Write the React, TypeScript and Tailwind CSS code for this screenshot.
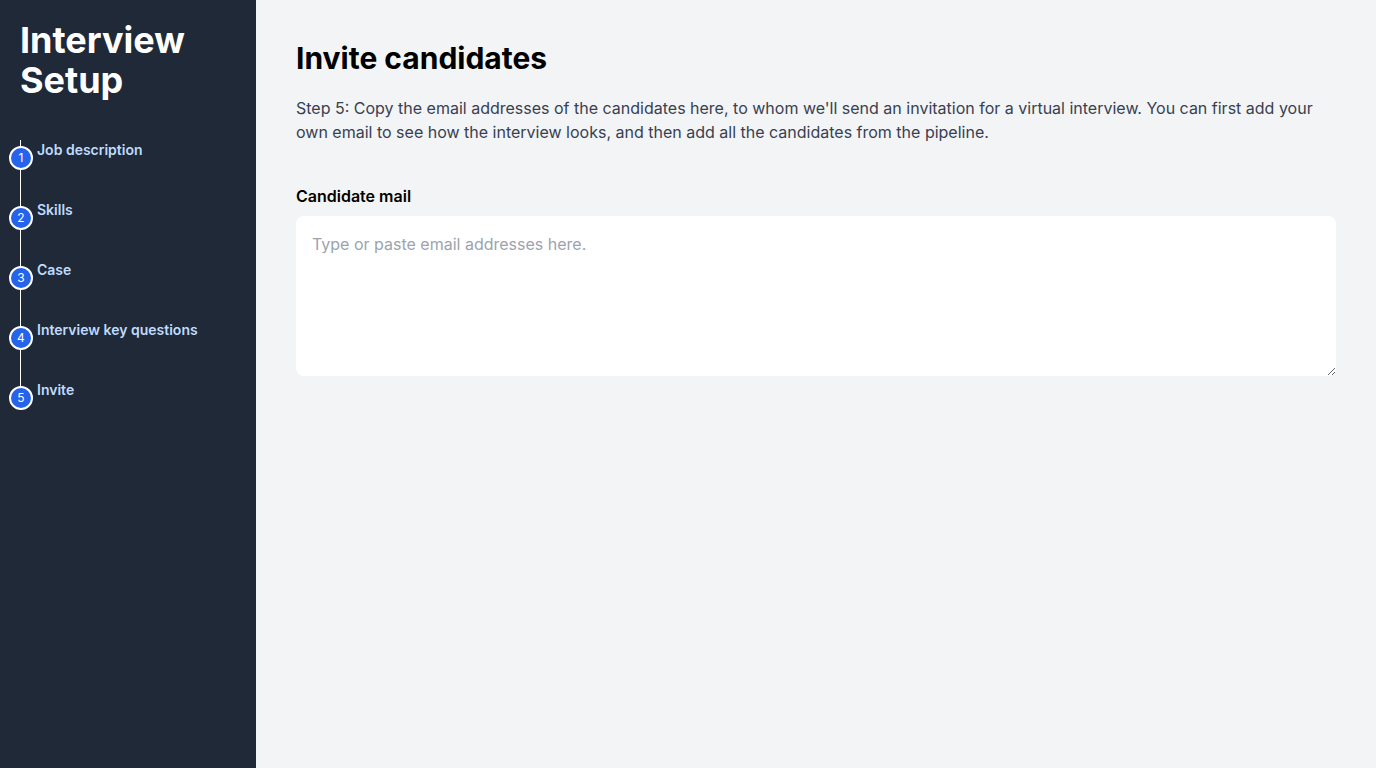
const steps = ["Job description", "Skills", "Case", "Interview key questions", "Invite"];

export default function App() {
  return (
    <div className="flex min-h-screen font-['Inter',sans-serif]">
      <aside className="w-64 shrink-0 bg-[#1f2937] px-5 pt-5">
        <h1 className="text-4xl font-bold text-white">
          Interview
          <br />
          Setup
        </h1>
        <ol className="relative mt-10 border-l border-white">
          {steps.map((s, i) => (
            <li key={s} className={i < steps.length - 1 ? "mb-10 ml-4" : "ml-4"}>
              <span className="absolute -left-3 mt-[6px] flex h-6 w-6 items-center justify-center rounded-full border-2 border-white bg-[#2563eb] text-xs text-white">
                {i + 1}
              </span>
              <p className="text-sm font-semibold text-[#bfdbfe]">{s}</p>
            </li>
          ))}
        </ol>
      </aside>
      <main className="flex-1 bg-[#f3f4f6] p-10">
        <h2 className="text-3xl font-bold text-black">Invite candidates</h2>
        <p className="mt-5 text-base text-[#374151]">
          Step 5: Copy the email addresses of the candidates here, to whom we'll send an invitation for a virtual
          interview. You can first add your own email to see how the interview looks, and then add all the candidates
          from the pipeline.
        </p>
        <label className="mt-10 mb-2 block text-base font-semibold text-black">Candidate mail</label>
        <textarea
          className="block h-40 w-full rounded-lg bg-white p-4 text-base text-gray-900 placeholder:text-[#9ca3af] focus:outline-none"
          placeholder="Type or paste email addresses here."
        />
      </main>
    </div>
  );
}
